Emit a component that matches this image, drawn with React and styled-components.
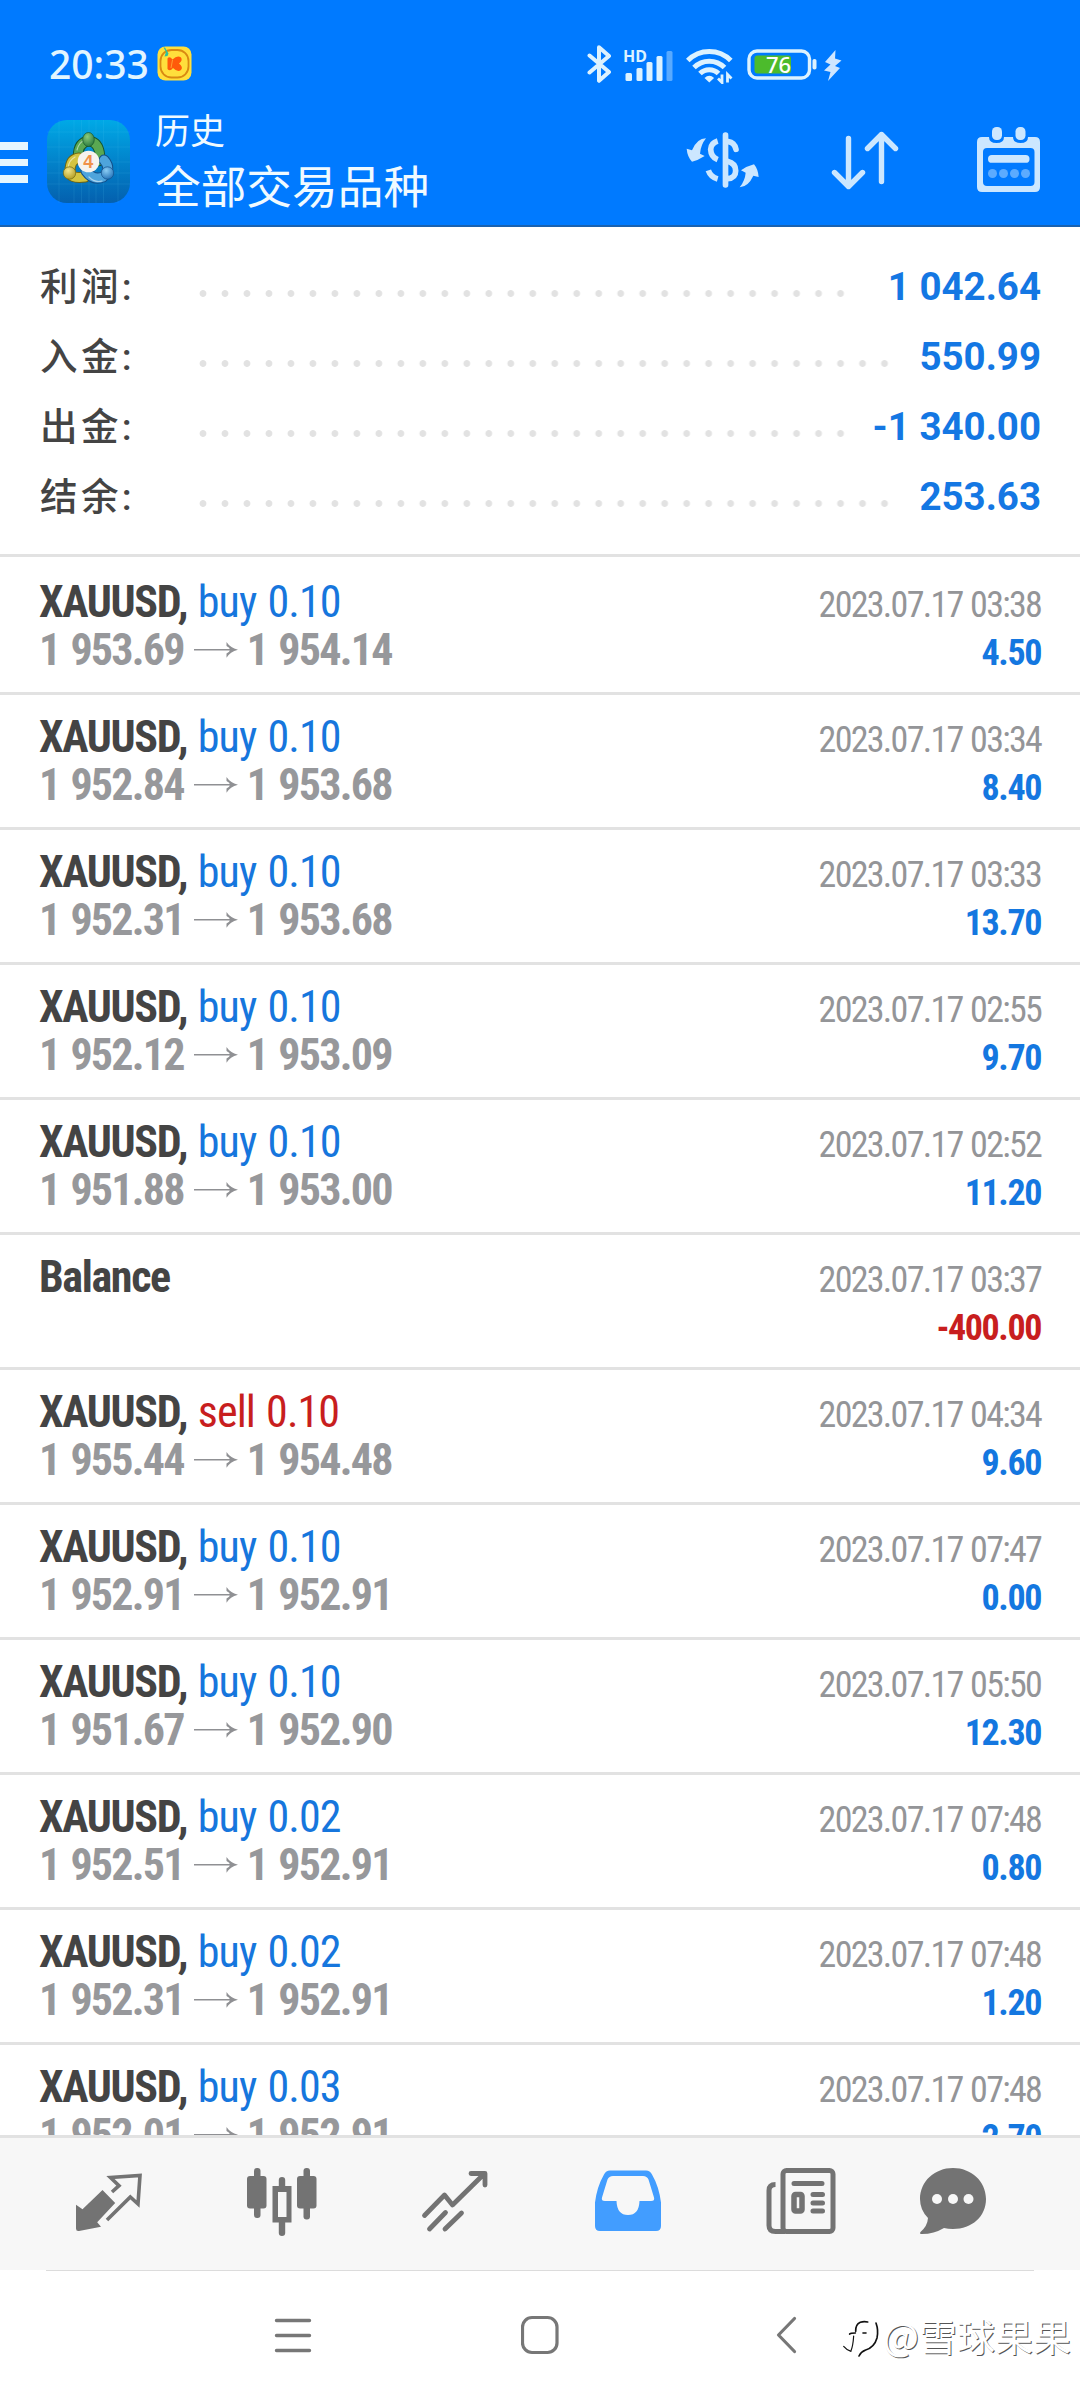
import styled, { createGlobalStyle } from "styled-components";

const summary = [
    { label: "利润:", value: "1 042.64", dots: 30 },
    { label: "入金:", value: "550.99", dots: 32 },
    { label: "出金:", value: "-1 340.00", dots: 30 },
    { label: "结余:", value: "253.63", dots: 32 },
];

const deals = [
    { type: "buy", lots: "0.10", open: "1 953.69", close: "1 954.14", time: "2023.07.17 03:38", profit: "4.50" },
    { type: "buy", lots: "0.10", open: "1 952.84", close: "1 953.68", time: "2023.07.17 03:34", profit: "8.40" },
    { type: "buy", lots: "0.10", open: "1 952.31", close: "1 953.68", time: "2023.07.17 03:33", profit: "13.70" },
    { type: "buy", lots: "0.10", open: "1 952.12", close: "1 953.09", time: "2023.07.17 02:55", profit: "9.70" },
    { type: "buy", lots: "0.10", open: "1 951.88", close: "1 953.00", time: "2023.07.17 02:52", profit: "11.20" },
    { type: "balance", time: "2023.07.17 03:37", profit: "-400.00" },
    { type: "sell", lots: "0.10", open: "1 955.44", close: "1 954.48", time: "2023.07.17 04:34", profit: "9.60" },
    { type: "buy", lots: "0.10", open: "1 952.91", close: "1 952.91", time: "2023.07.17 07:47", profit: "0.00" },
    { type: "buy", lots: "0.10", open: "1 951.67", close: "1 952.90", time: "2023.07.17 05:50", profit: "12.30" },
    { type: "buy", lots: "0.02", open: "1 952.51", close: "1 952.91", time: "2023.07.17 07:48", profit: "0.80" },
    { type: "buy", lots: "0.02", open: "1 952.31", close: "1 952.91", time: "2023.07.17 07:48", profit: "1.20" },
    { type: "buy", lots: "0.03", open: "1 952.01", close: "1 952.91", time: "2023.07.17 07:48", profit: "2.70" },
];

export default function App() {
    return (
        <Screen>
            <GlobalStyle />
            <Header>
                <StatusBar>
                    <Clock>20:33</Clock>
                    <CoinIcon />
                    <StatusIcons>
                        <BluetoothIcon />
                        <SignalIcon />
                        <WifiIcon />
                        <BatteryIcon />
                        <BoltIcon />
                    </StatusIcons>
                </StatusBar>
                <AppBar>
                    <MenuButton>
                        <span />
                        <span />
                        <span />
                    </MenuButton>
                    <AppLogo />
                    <Titles>
                        <Subtitle>历史</Subtitle>
                        <Title>全部交易品种</Title>
                    </Titles>
                    <Actions>
                        <CurrencyIcon />
                        <SortIcon />
                        <CalendarIcon />
                    </Actions>
                </AppBar>
            </Header>

            <Summary>
                {summary.map((item) => (
                    <SummaryRow key={item.label}>
                        <SummaryLabel>{item.label}</SummaryLabel>
                        <Leader $dots={item.dots} />
                        <SummaryValue>{item.value}</SummaryValue>
                    </SummaryRow>
                ))}
            </Summary>

            <DealList>
                {deals.map((deal, i) => (
                    <Deal key={i} {...deal} />
                ))}
            </DealList>

            <TabBar>
                <Tab><QuotesIcon /></Tab>
                <Tab><ChartsIcon /></Tab>
                <Tab><TradeIcon /></Tab>
                <Tab $active><HistoryIcon /></Tab>
                <Tab><NewsIcon /></Tab>
                <Tab><MessagesIcon /></Tab>
            </TabBar>

            <SystemBar>
                <svg width="38" height="40" viewBox="0 0 38 40" stroke="#777" strokeWidth="3.4" strokeLinecap="round">
                    <path d="M2.5 5.5h33M2.5 20.5h33M2.5 35.5h33" />
                </svg>
                <svg width="38" height="40" viewBox="0 0 38 40" fill="none" stroke="#777" strokeWidth="3.2">
                    <rect x="1.5" y="2.5" width="34.5" height="35" rx="9.5" />
                </svg>
                <svg width="38" height="40" viewBox="0 0 38 40" fill="none" stroke="#777" strokeWidth="3.2" strokeLinecap="round" strokeLinejoin="round">
                    <path d="M26.500 3.500 10.500 20l16 16.500" />
                </svg>
                <Watermark>
                    <WatermarkIcon />
                    <span>@雪球果果</span>
                </Watermark>
            </SystemBar>
        </Screen>
    );
}

function Deal({ type, lots, open, close, time, profit }) {
    return (
        <DealRow>
            <DealMain>
                {type === "balance" ? (
                    <Symbol>Balance</Symbol>
                ) : (
                    <>
                        <Symbol>
                            XAUUSD, <Side $sell={type === "sell"}>{type} {lots}</Side>
                        </Symbol>
                        <Prices>
                            {open}
                            <svg width="44" height="16" viewBox="0 0 44 16">
                                <path d="M0 7.8h38" stroke="#8f9093" strokeWidth="1.4" />
                                <path d="M32.5 0Q36 5.500 44 7.800 36 10 32.500 15.800V11.500Q36 9.800 36 7.800T32.500 4z" fill="#8f9093" />
                            </svg>
                            {close}
                        </Prices>
                    </>
                )}
            </DealMain>
            <DealSide>
                <Time>{time}</Time>
                <Profit $loss={profit.startsWith("-")}>{profit}</Profit>
            </DealSide>
        </DealRow>
    );
}

function CoinIcon() {
    return (
        <svg width="35" height="35" viewBox="0 0 35 35">
            <rect x=".5" y=".5" width="34" height="34" rx="8" fill="#ffdf3c" />
            <rect x="3.5" y="4" width="28" height="27.5" rx="11" fill="none" stroke="#d98a12" strokeWidth="1.8" />
            <path d="M10.500 12.500q2-3 5 1 5-5 8.500-2 2 3-2 6 4.500 3.500 2 6.500-3.500 2.500-8-2-3 4-5.500 1z" fill="#ff5a0a" />
            <path d="m15.500 14-1.500 8" stroke="#ffb23c" strokeWidth=".8" />
            <path d="M6.500 1.500 9 6l-1.500 4.500 3-.5 1-2.500L8 1.500z" fill="#2fc0a0" />
        </svg>
    );
}

function BluetoothIcon() {
    return (
        <svg width="25" height="40" viewBox="0 0 25 40" fill="none" stroke="#dcf2ff" strokeWidth="4" strokeLinejoin="round" strokeLinecap="round">
            <path d="M2.5 11.5 22 28 12 36.800V3.200L22 12 2.500 28.500" />
        </svg>
    );
}

function SignalIcon() {
    return (
        <svg width="51" height="40" viewBox="0 0 51 40" fill="#dcf2ff">
            <HdText x="0" y="17.5">HD</HdText>
            <rect x="2.5" y="29" width="6.5" height="8" rx="1.5" />
            <rect x="13.5" y="24" width="6" height="13" rx="1.5" />
            <rect x="23.5" y="18" width="6" height="19" rx="1.5" />
            <rect x="33.5" y="12" width="6" height="25" rx="1.5" />
            <rect x="43.5" y="7" width="6" height="30" rx="1.5" opacity=".4" />
        </svg>
    );
}

function WifiIcon() {
    return (
        <svg width="47" height="40" viewBox="0 0 47 40" fill="none" stroke="#dcf2ff" strokeWidth="5">
            <path d="M1.800 16.500a30 30 0 0 1 43 0" />
            <path d="M8 23.500a21.500 21.500 0 0 1 30.500 0" />
            <path d="M14 29.500a13 13 0 0 1 18.500 0" />
            <path d="M23.300 38.500 18.500 34q4.800-4.500 9.600 0z" fill="#dcf2ff" stroke="none" />
            <path d="M36 30.500v8l-4-4M41.500 38.500v-8l4 4" strokeWidth="2.8" />
        </svg>
    );
}

function BatteryIcon() {
    return (
        <svg width="71" height="40" viewBox="0 0 71 40">
            <rect x="2" y="7" width="60.5" height="27" rx="8" fill="none" stroke="#dcf2ff" strokeWidth="3.4" />
            <rect x="7.5" y="11.5" width="36.5" height="18" rx="3" fill="#4cbb2c" />
            <rect x="65.5" y="15" width="4" height="10.5" rx="1.8" fill="#dcf2ff" />
            <BatteryText x="19" y="28.5">76</BatteryText>
        </svg>
    );
}

function BoltIcon() {
    return (
        <svg width="19" height="40" viewBox="0 0 19 40" fill="#cfe6ff">
            <path d="M12.500 6 2 18l5.500 2.500L1 26.500 7.500 28 5 37l12-13-5-2 6.500-5.500-6.500-2z" />
        </svg>
    );
}

function AppLogo() {
    return (
        <Logo viewBox="0 0 83 83">
            <defs>
                <linearGradient id="sky" x1="0" y1="0" x2="0" y2="1">
                    <stop offset="0" stopColor="#00a9e6" />
                    <stop offset=".5" stopColor="#0283cb" />
                    <stop offset="1" stopColor="#0460ae" />
                </linearGradient>
                <radialGradient id="green" cx=".4" cy=".3" r=".8">
                    <stop offset="0" stopColor="#8ccb7c" />
                    <stop offset="1" stopColor="#1f7238" />
                </radialGradient>
                <radialGradient id="gold" cx=".4" cy=".3" r=".8">
                    <stop offset="0" stopColor="#f3e58a" />
                    <stop offset="1" stopColor="#ac961a" />
                </radialGradient>
                <radialGradient id="blue" cx=".4" cy=".3" r=".8">
                    <stop offset="0" stopColor="#8accf4" />
                    <stop offset="1" stopColor="#1c6cb4" />
                </radialGradient>
            </defs>
            <rect width="83" height="83" rx="20" fill="url(#sky)" />
            <path d="M12 0v83M27 0v83M34.5 0v83M42 0v83M49 0v83M56.5 0v83M71 0v83M0 12h83M0 27h83M0 42h83M0 53h83M0 64h83" stroke="#5fd0f5" strokeWidth=".6" opacity=".2" />
            <g fill="none" strokeLinecap="round">
                <path d="M31 37q0-15 11-16 10 1 11 15l-1 5" stroke="#17552c" strokeWidth="10.5" />
                <path d="M31 37q0-15 11-16 10 1 11 15l-1 5" stroke="#5aa852" strokeWidth="8.5" />
                <path d="M38 57q-16 2-15-6 0-12 9-13" stroke="#6f6512" strokeWidth="11" />
                <path d="M38 57q-16 2-15-6 0-12 9-13" stroke="#d3c440" strokeWidth="9" />
                <path d="M39 51q7 10 17 6 9-8 1-17" stroke="#124f8a" strokeWidth="11" />
                <path d="M39 51q7 10 17 6 9-8 1-17" stroke="#4ea4dc" strokeWidth="9" />
                <path d="M30 30q2-8 8-10M21 48q1-8 7-11M42 57q6 6 13 4" stroke="#fff" strokeWidth="1.2" opacity=".5" />
            </g>
            <ellipse cx="41.5" cy="19.5" rx="5.8" ry="7" fill="url(#green)" stroke="#17552c" strokeWidth=".7" />
            <circle cx="22.5" cy="53" r="6.2" fill="url(#gold)" stroke="#6f6512" strokeWidth=".7" />
            <circle cx="60.5" cy="53" r="6.2" fill="url(#blue)" stroke="#124f8a" strokeWidth=".7" />
            <circle cx="41.5" cy="41.5" r="10.8" fill="#f6f3ee" />
            <LogoText x="41.3" y="48">4</LogoText>
        </Logo>
    );
}

function CurrencyIcon() {
    return (
        <svg width="73" height="60" viewBox="46 43 219 180" fill="#cce7ff">
            <rect x="156" y="50" width="17" height="166" rx="8" />
            <g fill="none" stroke="#cce7ff" strokeWidth="17">
                <path d="M141 76q-20 6-21 25 1 23 21 31M141 190q-21-6-28-26" />
                <path d="M173 78q18 2 23 23" strokeLinecap="round" />
                <path d="M170 137q25 6 25 28t-25 24" />
            </g>
            <path d="M106 68q-27 0-42 36l-16-5q2 24 16 39 18-4 38-17l-14-7q2-26 18-46z" />
            <path d="M207 215q26-2 41-35l16 4q-2-24-14-38-20 5-39 18l14 7q-2 24-18 44z" />
        </svg>
    );
}

function SortIcon() {
    return (
        <svg width="68" height="60" viewBox="0 0 68 60" fill="none" stroke="#cce7ff" strokeWidth="5.4" strokeLinecap="round" strokeLinejoin="round">
            <path d="M17.5 8.500v48M3.500 42.500l14 14 14-14M50.500 51.500v-47M36.500 18.500l14-14 14 14" />
        </svg>
    );
}

function CalendarIcon() {
    return (
        <svg width="64" height="66" viewBox="0 0 64 66" fill="#cce7ff">
            <path d="M5 10h7q0 6 7.500 6T27 10h9q0 6 7.500 6T51 10h7q5 0 5 5v45q0 5-5 5H5q-5 0-5-5V15q0-5 5-5zm5 11q-4 0-4 4v30q0 4 4 4h43.500q4 0 4-4V25q0-4-4-4z" fillRule="evenodd" />
            <rect x="15" y="0" width="10" height="13" rx="4.5" />
            <rect x="38.5" y="0" width="10" height="13" rx="4.5" />
            <rect x="11" y="28" width="41.5" height="7.8" rx="3.9" />
            <g opacity=".45">
                <circle cx="15.5" cy="46.5" r="4.5" />
                <circle cx="26.5" cy="46.5" r="4.5" />
                <circle cx="37.5" cy="46.5" r="4.5" />
                <circle cx="48.5" cy="46.5" r="4.5" />
            </g>
        </svg>
    );
}

function QuotesIcon() {
    return (
        <svg width="70" height="70" viewBox="0 0 70 70">
            <path d="m28.500 23 12.700 13-18 19.300 3.800 4.400L5 64q-3 .5-3-2.500V37.700l6.500 4.600z" fill="currentColor" />
            <path d="m38 25 7-6.300L36.500 10.500l29.500-2-2 28.500-7.700-7L33 53" fill="none" stroke="currentColor" strokeWidth="3.6" />
        </svg>
    );
}

function ChartsIcon() {
    return (
        <svg width="70" height="70" viewBox="0 0 70 70" fill="currentColor">
            <rect x="7" y="1" width="6.5" height="50" rx="3" />
            <rect x="0" y="9" width="19.5" height="32.5" rx="3" />
            <rect x="56.5" y="1" width="6.5" height="51.5" rx="3" />
            <rect x="50" y="9" width="19.5" height="32.5" rx="3" />
            <path d="M31.800 13q0-3 3.200-3t3.200 3v6h6.300v36.500h-6.300V66q0 3-3.200 3t-3.200-3V55.500h-6.300V19h6.300zM31 25v25h8.500V25z" fillRule="evenodd" />
        </svg>
    );
}

function TradeIcon() {
    return (
        <svg width="70" height="70" viewBox="0 0 70 70" fill="none" stroke="currentColor" strokeWidth="4.8" strokeLinecap="round" strokeLinejoin="round">
            <path d="m4.500 48.500 20-20.500 8 10L63.500 7.500M51 6.500h14V18M9.500 62l16-16.500M25 62l16.500-16" />
        </svg>
    );
}

function HistoryIcon() {
    return (
        <svg width="70" height="70" viewBox="0 0 70 70">
            <path d="M17 3.500h36q4 0 6 4 7 12 9 28V59q0 5-5 5H7q-5 0-5-5V35.500Q4 19.500 11 7.500q2-4 6-4z" fill="currentColor" />
            <path d="M20 9h30q4 0 5.500 3.500l5.500 18q1 3.500-3 3.500H46.500q-.5 14-11.500 14T23.500 34H12q-4 0-3-3.500l5.500-18Q16 9 20 9z" fill="#f7f7f7" />
        </svg>
    );
}

function NewsIcon() {
    return (
        <svg width="70" height="70" viewBox="0 0 70 70" fill="none" stroke="currentColor" strokeWidth="5">
            <rect x="17" y="3.5" width="50" height="61" rx="3.5" />
            <path d="M9.500 17.500q-6.500 0-6.500 6v35q0 6 6.500 6h10" />
            <path d="M28 16.500h28M47 27.500h9.500M47 36h9.500M47 44h9.500" strokeLinecap="round" />
            <rect x="28" y="27.5" width="8" height="16.5" rx="1.5" strokeWidth="5.5" />
        </svg>
    );
}

function MessagesIcon() {
    return (
        <svg width="70" height="70" viewBox="0 0 70 70">
            <path d="M35 1c18.500 0 33 13.500 33 31S54 62 35 62q-5 0-9-1-10 6-22 6-3 0-1.500-2 7-6 7.500-14Q2 43 2 32C2 14.500 16.500 1 35 1z" fill="currentColor" />
            <g fill="#f7f7f7">
                <circle cx="19" cy="32" r="5" />
                <circle cx="35" cy="32" r="5" />
                <circle cx="50.5" cy="32" r="5" />
            </g>
        </svg>
    );
}

function WatermarkIcon() {
    return (
        <svg width="38" height="40" viewBox="60 76 114 120" fill="none" stroke="#111" strokeLinecap="round">
            <path d="M101 113q-1-20 14-27 10-4 22-1M83 121q2-3 17-3M123 118h9" strokeWidth="5" />
            <path d="M95 127q-2 30-8 44M65 158q9 11 22 15" strokeWidth="3.5" />
            <path d="M162 88q8 22 3 45-8 28-34 36-14 5-20 18" strokeWidth="5" />
        </svg>
    );
}

const GlobalStyle = createGlobalStyle`
    * {
        box-sizing: border-box;
    }

    body {
        margin: 0;
        background: #fff;
        font-family: Roboto, "Noto Sans CJK SC", sans-serif;
    }

    svg {
        display: block;
        flex-shrink: 0;
    }
`;

const Screen = styled.div`
    display: flex;
    flex-direction: column;
    width: 1080px;
    height: 2400px;
    overflow: hidden;
    background: #fff;
`;

const Header = styled.header`
    height: 227px;
    background: #007aff;
    border-bottom: 2px solid #1a62b0;
`;

const StatusBar = styled.div`
    display: flex;
    align-items: center;
    height: 98px;
    padding: 29px 0 0 49px;
`;

const Clock = styled.span`
    width: 108px;
    font: 500 39px/60px "Noto Sans", sans-serif;
    color: #e2f5ff;
`;

const StatusIcons = styled.div`
    display: flex;
    align-items: center;
    margin-left: 395px;

    svg:nth-child(2) {
        margin-left: 11px;
    }

    svg:nth-child(3) {
        margin-left: 12px;
    }

    svg:nth-child(4) {
        margin-left: 14px;
    }

    svg:nth-child(5) {
        margin-left: 5px;
    }
`;

const HdText = styled.text`
    font: 700 16px "Noto Sans", sans-serif;
`;

const BatteryText = styled.text`
    font: 500 22px "Noto Sans", sans-serif;
    fill: #fff;
`;

const AppBar = styled.div`
    display: flex;
    align-items: flex-start;
    height: 128px;
    padding-top: 4px;
`;

const MenuButton = styled.div`
    display: flex;
    flex-direction: column;
    gap: 9px;
    width: 47px;
    padding-top: 40px;

    span {
        width: 28px;
        height: 7.5px;
        background: #e6f6ff;
    }
`;

const Logo = styled.svg`
    width: 83px;
    height: 83px;
    margin-top: 18px;
`;

const LogoText = styled.text`
    font: 700 18px "Liberation Sans", sans-serif;
    fill: #f0924a;
    text-anchor: middle;
`;

const Titles = styled.div`
    width: 556px;
    padding: 3px 0 0 25px;
    color: #f0faff;
`;

const Subtitle = styled.div`
    font: 400 35px/48px "Noto Sans CJK SC", sans-serif;
`;

const Title = styled.h1`
    margin: 0;
    font: 400 45.7px/62px "Noto Sans CJK SC", sans-serif;
`;

const Actions = styled.div`
    display: flex;
    align-items: center;
    height: 66px;
    margin-top: 25px;

    svg:nth-child(2) {
        margin-left: 72px;
    }

    svg:nth-child(3) {
        margin-left: 78px;
    }
`;

const Summary = styled.section`
    height: 330px;
    padding: 25px 39px 0 40px;
    border-bottom: 3px solid #e2e2e2;
`;

const SummaryRow = styled.div`
    display: flex;
    height: 70px;
`;

const SummaryLabel = styled.span`
    width: 152px;
    font-size: 37.5px;
    font-weight: 500;
    line-height: 70px;
    letter-spacing: 3.4px;
    color: #444;
`;

const Leader = styled.span`
    width: ${({ $dots }) => $dots * 21.99}px;
    height: 7px;
    margin-top: 38px;
    background: radial-gradient(circle at center, #e2e2e2 3px, transparent 3.8px) 0 0 / 21.99px 7px repeat-x;
`;

const SummaryValue = styled.span`
    margin-left: auto;
    font-size: 38.5px;
    font-weight: 700;
    line-height: 70px;
    color: #1477e3;
`;

const DealList = styled.section`
    height: 1578px;
    padding-top: 3px;
    overflow: hidden;
    font-family: "Roboto Condensed", Roboto, sans-serif;
`;

const DealRow = styled.div`
    display: flex;
    justify-content: space-between;
    height: 135px;
    padding: 18px 39px 0 39px;
    border-bottom: 3px solid #e2e2e2;
`;

const DealMain = styled.div`
    font-size: 44px;
    line-height: 48px;
`;

const Symbol = styled.div`
    font-weight: 700;
    letter-spacing: -1.35px;
    word-spacing: 2px;
    color: #444;
`;

const Side = styled.span`
    font-weight: 400;
    letter-spacing: -.95px;
    color: ${({ $sell }) => $sell ? '#c81e1e' : '#1676dd'};
`;

const Prices = styled.div`
    display: flex;
    align-items: center;
    font-weight: 700;
    letter-spacing: -1.75px;
    word-spacing: 2.5px;
    color: #97989b;

    svg {
        margin: 0 9px 0 10px;
    }
`;

const DealSide = styled.div`
    padding-top: 3px;
    font-size: 36px;
    line-height: 48px;
    text-align: right;
`;

const Time = styled.div`
    letter-spacing: -1.72px;
    word-spacing: 1px;
    color: #949598;
`;

const Profit = styled.div`
    font-weight: 700;
    letter-spacing: -1.4px;
    color: ${({ $loss }) => $loss ? '#c81e1e' : '#1477e0'};
`;

const TabBar = styled.nav`
    display: flex;
    height: 135px;
    padding-left: 22px;
    background: #f7f7f7;
    border-top: 3px solid #e2e2e2;
`;

const Tab = styled.div`
    display: flex;
    justify-content: center;
    width: 173px;
    padding-top: 29px;
    color: ${({ $active }) => $active ? '#429dff' : '#737373'};

    &:last-child {
        width: 132px;
    }
`;

const SystemBar = styled.div`
    position: relative;
    display: flex;
    justify-content: center;
    gap: 209px;
    height: 130px;
    padding-top: 45px;

    &::before {
        content: "";
        position: absolute;
        top: 0;
        left: 46px;
        right: 46px;
        height: 1px;
        background: #dcdcdc;
    }
`;

const Watermark = styled.div`
    position: absolute;
    top: 38px;
    right: 9px;
    display: flex;
    align-items: center;
    gap: 3px;
    font: 400 38px/54px "Noto Sans CJK SC", sans-serif;
    color: #fff;
    text-shadow: 1px 1px 0 #555;

    svg {
        margin-top: 8px;
    }
`;
